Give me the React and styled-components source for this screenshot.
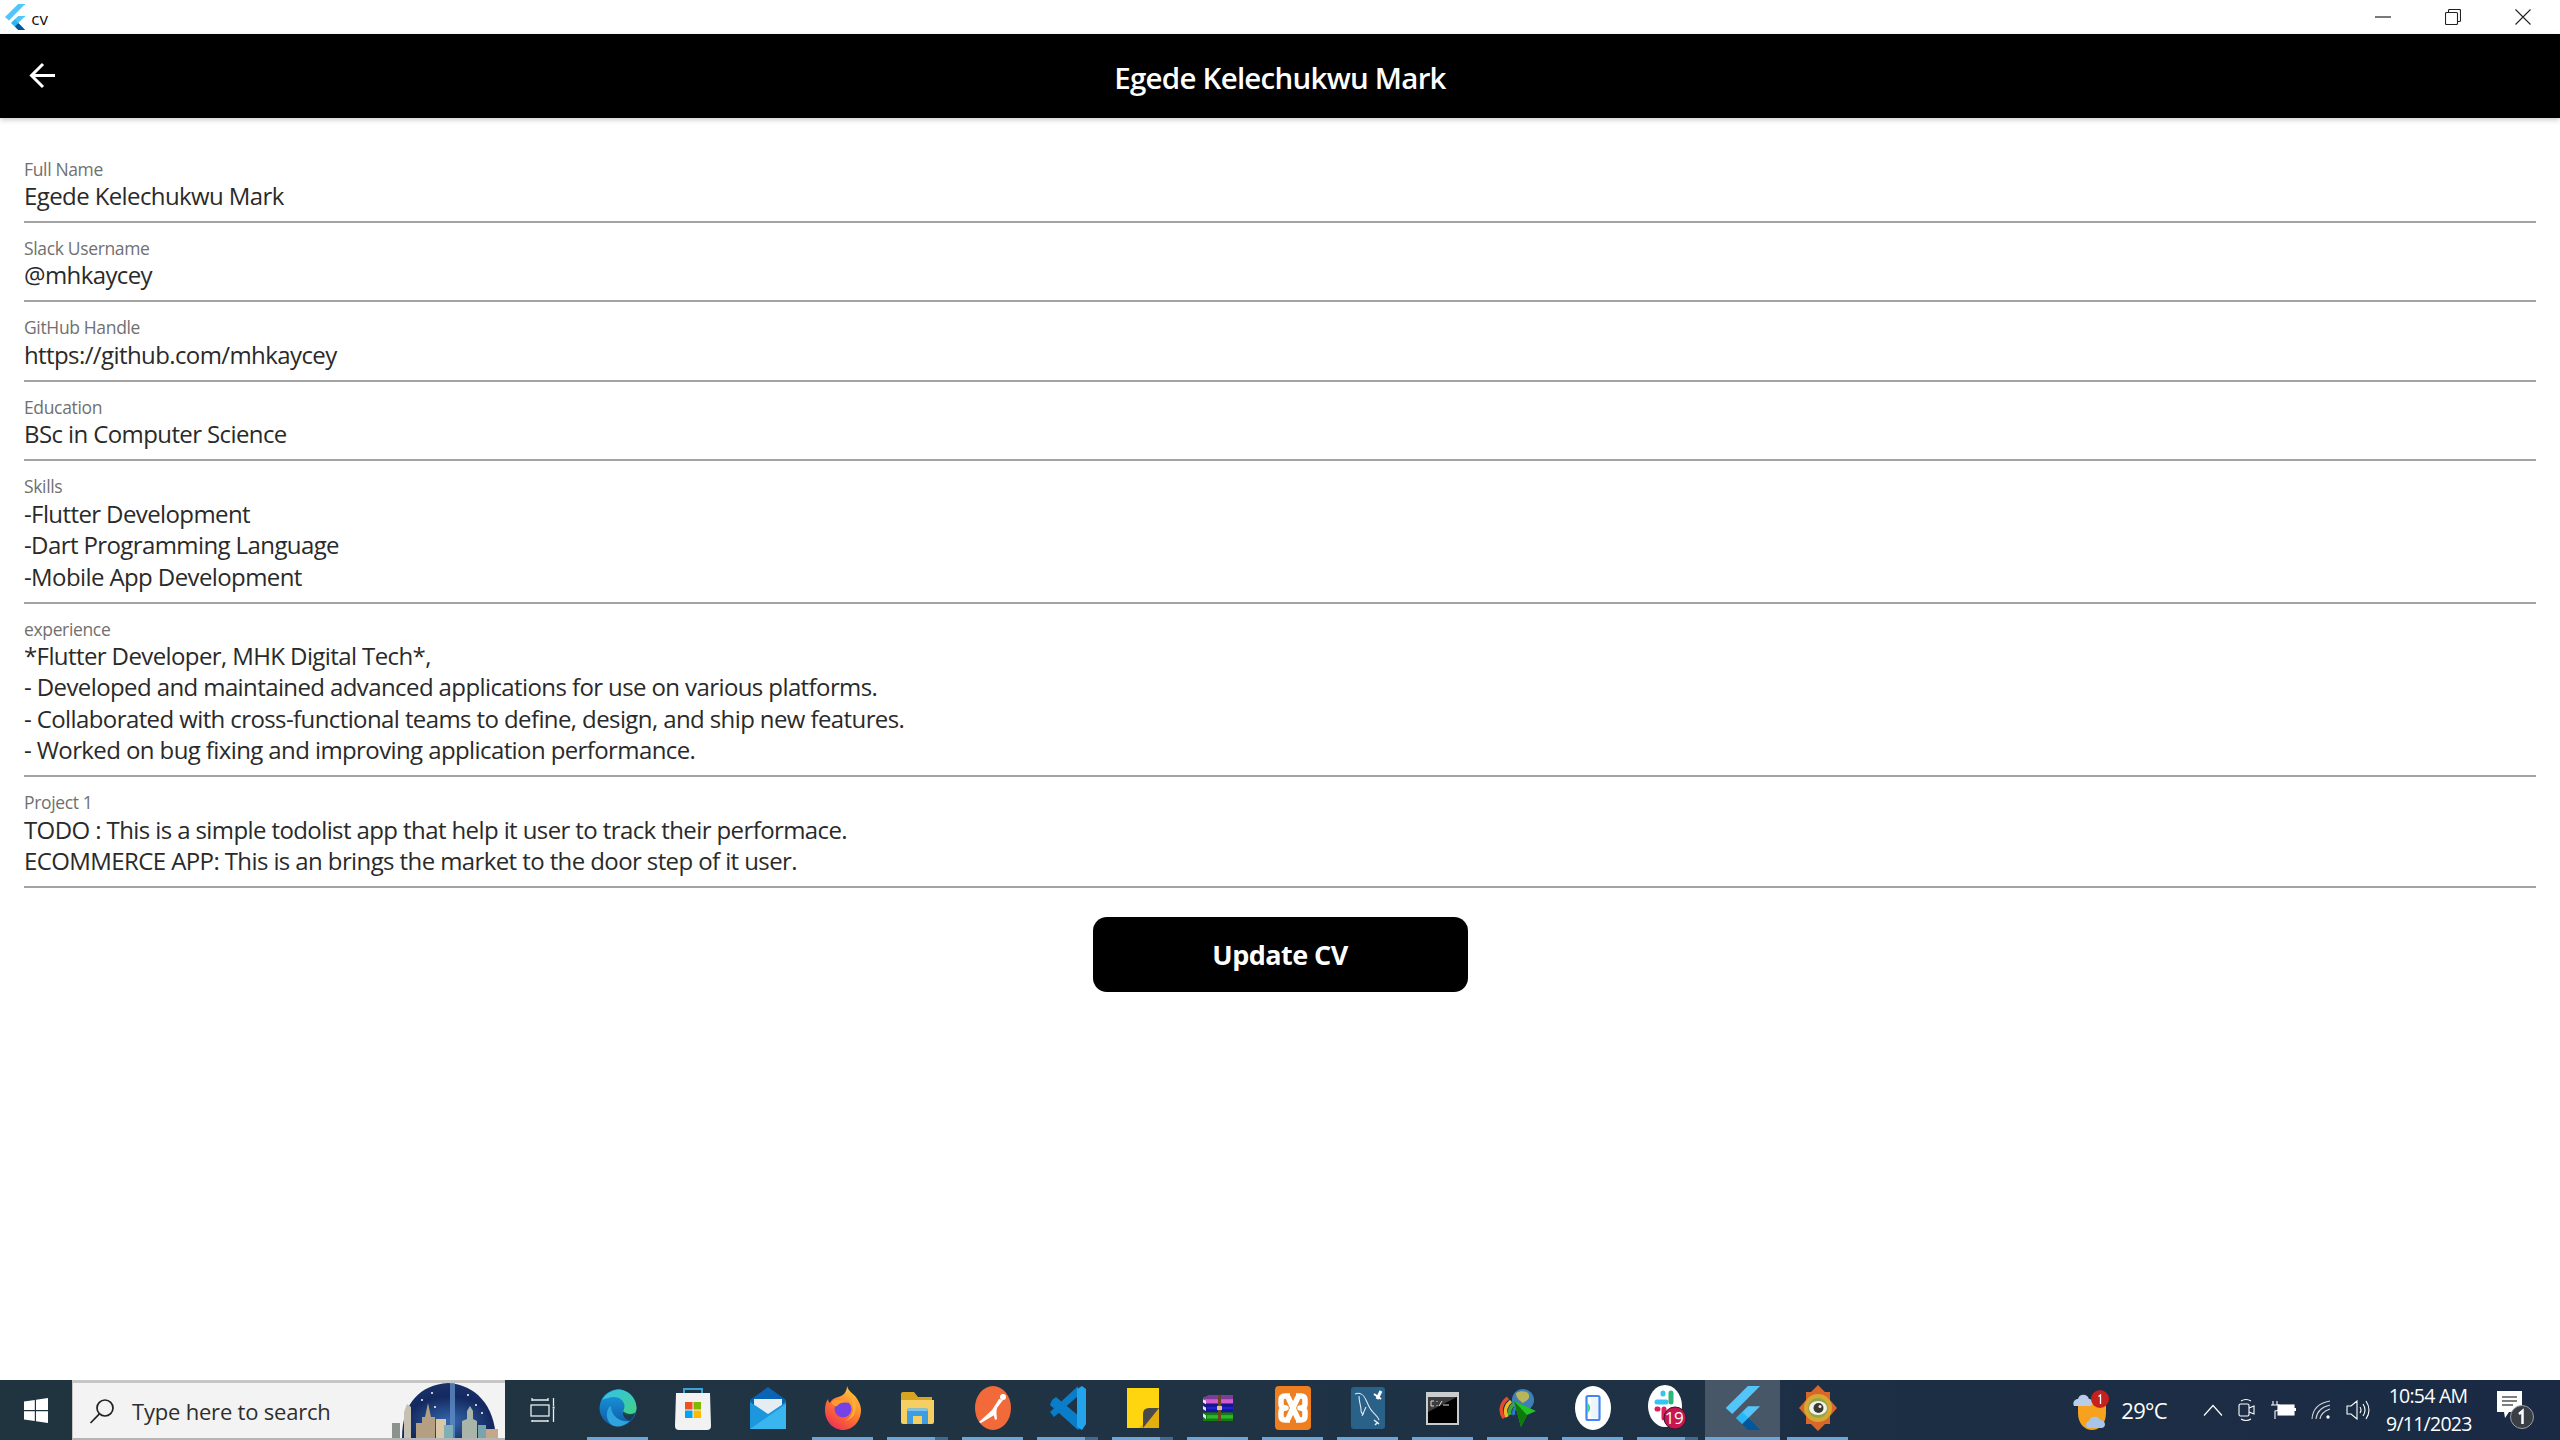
import React from "react";
import styled, { createGlobalStyle } from "styled-components";

const Global = createGlobalStyle`
  html, body { margin: 0; padding: 0; background: #fff; }
  body { font-family: "Open Sans", "Noto Sans", sans-serif; }
  #root { width: 2560px; height: 1440px; }
`;

const Page = styled.div`
  width: 2560px;
  height: 1440px;
  display: flex;
  flex-direction: column;
  overflow: hidden;
`;

const TitleBar = styled.div`
  height: 34px;
  display: flex;
  align-items: center;
  padding: 0 2px 0 4px;
  background: #fff;
`;
const AppName = styled.span`
  margin-left: 6px;
  font-size: 17px;
  color: #111;
  margin-top: 2px;
`;
const Caption = styled.div`
  margin-left: auto;
  display: flex;
`;
const CaptionButton = styled.div`
  width: 70px;
  height: 34px;
  display: flex;
  align-items: center;
  justify-content: center;
`;

const AppBar = styled.header`
  position: relative;
  height: 84px;
  background: #000;
  display: flex;
  align-items: center;
  justify-content: center;
  box-shadow: 0 2px 5px rgba(0, 0, 0, 0.2);
`;
const BackButton = styled.div`
  position: absolute;
  left: 29px;
  top: 28px;
  width: 27px;
  height: 27px;
  display: flex;
`;
const AppTitle = styled.h1`
  margin: 2px 0 0;
  font-size: 29.5px;
  font-weight: 600;
  letter-spacing: -0.75px;
  color: #fff;
`;

const Form = styled.main`
  flex: 1;
  padding: 25.5px 24px 0;
  display: flex;
  flex-direction: column;
`;
const Field = styled.div`
  padding: 14px 0 9.5px;
  border-bottom: 2px solid #a3a3a3;
`;
const Label = styled.div`
  font-size: 17.5px;
  line-height: 22.4px;
  letter-spacing: -0.35px;
  color: #707070;
`;
const Value = styled.div`
  font-size: 24px;
  line-height: 31.5px;
  letter-spacing: -0.6px;
  color: #2a2a2a;
  white-space: pre-line;
`;
const UpdateButton = styled.button`
  align-self: center;
  margin-top: 28.5px;
  width: 375px;
  height: 75px;
  border: 0;
  border-radius: 14px;
  background: #000;
  color: #fff;
  font-family: inherit;
  font-size: 27px;
  font-weight: 700;
  letter-spacing: -0.55px;
`;

const Taskbar = styled.footer`
  height: 60px;
  display: flex;
  align-items: stretch;
  background: linear-gradient(90deg, #20343f 0%, #1f3345 50%, #1a2a44 100%);
`;
const StartCell = styled.div`
  width: 72px;
  display: flex;
  align-items: center;
  justify-content: center;
`;
const SearchBox = styled.div`
  position: relative;
  width: 433px;
  box-sizing: border-box;
  display: flex;
  align-items: center;
  padding-left: 16px;
  background: #f3f3f3;
  border-top: 3px solid #c6c6c6;
  border-left: 1px solid #c6c6c6;
  border-bottom: 2px solid #b5b5b5;
  overflow: hidden;
`;
const SearchText = styled.span`
  margin-left: 17px;
  font-size: 22px;
  letter-spacing: -0.2px;
  color: #2e2e2e;
`;
const SearchArt = styled.div`
  position: absolute;
  right: 5px;
  top: 0;
  bottom: 0;
  width: 110px;
  display: flex;
`;
const TaskCell = styled.div`
  position: relative;
  width: 75px;
  display: flex;
  align-items: center;
  justify-content: center;
  background: ${(p) => (p.$active ? "#475767" : "transparent")};
  padding-bottom: ${(p) => (p.$plain ? "0" : "4px")};
  box-sizing: border-box;
`;
const Running = styled.div`
  position: absolute;
  bottom: 0;
  left: ${(p) => (p.$active ? "0" : "7px")};
  right: ${(p) => (p.$active ? "0" : "7px")};
  height: 3px;
  background: ${(p) =>
    p.$multi
      ? "linear-gradient(90deg, #6ba6d8 0 78%, #3d6c92 78% 100%)"
      : "#6ba6d8"};
`;
const Tray = styled.div`
  margin-left: auto;
  display: flex;
  align-items: center;
  color: #fff;
`;
const Weather = styled.div`
  display: flex;
  align-items: center;
  gap: 10px;
  font-size: 22px;
  letter-spacing: -0.7px;
  margin-right: 36px;
`;
const TrayIcons = styled.div`
  display: flex;
  align-items: center;
  gap: 15px;
  margin-right: 16px;
`;
const Clock = styled.div`
  width: 84px;
  text-align: center;
  font-size: 19.5px;
  line-height: 28px;
  letter-spacing: -0.75px;
`;
const Notify = styled.div`
  margin-left: 27px;
  margin-right: 26px;
  display: flex;
`;

const FlutterLogo = ({ size = 24 }) => (
  <svg width={size * 0.82} height={size} viewBox="0 0 166 202">
    <path fill="#54C5F8" d="M8 101 110 0h56L38 129z" />
    <path fill="#54C5F8" d="M166 93h-56l-54 54 28 28z" />
    <path fill="#29B6F6" d="M56 147l28-28 28 28-28 28z" />
    <path fill="#01579B" d="M84 175l28-28 54 55h-56z" />
  </svg>
);

const WinLogo = () => (
  <svg width="24" height="25" viewBox="0 0 24 25">
    <path fill="#fff" d="M0 3.6 10.8 2v10H0zM12 1.8 24 0v12H12zM0 13.2h10.8V23L0 21.4zM12 13.2h12V25l-12-1.8z" />
  </svg>
);

const SearchGlass = () => (
  <svg width="26" height="26" viewBox="0 0 26 26" fill="none" stroke="#222" strokeWidth="1.7">
    <circle cx="16" cy="10" r="8" />
    <path d="M10.4 15.8 1.5 25" />
  </svg>
);

const CityArt = () => (
  <svg width="110" height="55" viewBox="0 0 110 55">
    <defs>
      <radialGradient id="sky" cx="50%" cy="70%" r="70%">
        <stop offset="0%" stopColor="#3567ad" />
        <stop offset="65%" stopColor="#14295f" />
        <stop offset="100%" stopColor="#1a3268" />
      </radialGradient>
    </defs>
    <path fill="url(#sky)" d="M12 55C12 20 30 2 58 0c28 2 46 22 48 55z" />
    <rect x="60" y="0" width="5" height="55" fill="#5f8cc6" opacity=".8" />
    <g fill="#fff">
      <circle cx="32" cy="17" r="1" /><circle cx="42" cy="10" r="1" /><circle cx="45" cy="24" r="1" />
      <circle cx="78" cy="12" r="1" /><circle cx="86" cy="22" r="1" /><circle cx="92" cy="30" r="1" />
    </g>
    <path fill="#8b938e" d="M2 55V40h8v15z" />
    <path fill="#c5c0b0" d="M14 55V29l3-8 4 3v31z" />
    <path fill="#b49f82" d="M26 55V40h6v-6h3l3-14 3 14h4v21z" />
    <path fill="#d8c8a8" d="M46 55V36h10v19z" />
    <path fill="#7fb0b8" d="M54 55V42h9v13z" />
    <path fill="#a9b5a8" d="M72 55V38l5-2v-8l3-5 3 5v8l4 2v17z" />
    <path fill="#77a4ad" d="M88 55V42h8v13z" />
    <path fill="#c3a88a" d="M96 55V46h12v9z" />
  </svg>
);

const TaskView = () => (
  <svg width="26" height="26" viewBox="0 0 26 26" fill="none" stroke="#e8edf0" strokeWidth="1.3">
    <path d="M2 3h16M2 24h16M2 1v3M18 1v3M2 23v2M18 23v2" />
    <rect x="1" y="8" width="18" height="11" />
    <path d="M23.5 1v8M23.5 12v13" />
    <rect x="22.6" y="9.5" width="2" height="2.2" fill="#e8edf0" stroke="none" />
  </svg>
);

const Edge = () => (
  <svg width="38" height="38" viewBox="0 0 38 38">
    <defs>
      <linearGradient id="edgeA" x1="0" y1="0" x2="0" y2="1">
        <stop offset="0" stopColor="#1b9de2" />
        <stop offset="1" stopColor="#0c59a4" />
      </linearGradient>
      <linearGradient id="edgeB" x1="0" y1="0" x2="1" y2="1">
        <stop offset="0" stopColor="#35c1f1" />
        <stop offset="1" stopColor="#41d27f" />
      </linearGradient>
    </defs>
    <circle cx="19" cy="19" r="18.5" fill="url(#edgeA)" />
    <path fill="url(#edgeB)" d="M3 11C8 2 18 .5 19 .5 30 .5 37.5 10 37.5 19c0 5-4 7-8 7-3 0-6-1-6-3 0-1 2-2 2-6 0-5-5-9-10-9-5 0-10 2-12.500 3z" />
    <path fill="#1c3545" opacity=".85" d="M24 22c3 3 8 4 12 2-1 3-3 6-5 8-5-1-8-6-7-10z" />
    <path fill="#2fa3dc" d="M12 17c0 9 7 14 13 15 3 .5 5 0 6-.5-4 4-8 6-12 6-9 0-12-8-11-14 .5-3 2-6 4-6.500z" />
  </svg>
);

const Store = () => (
  <svg width="36" height="44" viewBox="0 0 36 44">
    <path fill="none" stroke="#3aa5d8" strokeWidth="2" d="M9 9V3h18v6" />
    <path fill="#f2f2f2" d="M1 7h34l1 33q0 4-4 4H4q-4 0-4-4z" />
    <rect x="10" y="16" width="7.500" height="7.500" fill="#f05022" />
    <rect x="18.500" y="16" width="7.500" height="7.500" fill="#7fba00" />
    <rect x="10" y="24.500" width="7.500" height="7.500" fill="#00a4ef" />
    <rect x="18.500" y="24.500" width="7.500" height="7.500" fill="#ffb900" />
  </svg>
);

const Mail = () => (
  <svg width="36" height="42" viewBox="0 0 36 42">
    <path fill="#0b63b5" d="M18 0 36 13v6H0v-6z" />
    <path fill="#e6edf2" d="M4 12h28v12L18 31 4 24z" />
    <path fill="#1c96dd" d="M0 15 18 27 36 15v27H0z" />
    <path fill="#39b5f0" d="M0 42 36 17v25z" />
  </svg>
);

const Firefox = () => (
  <svg width="36" height="44" viewBox="0 0 36 44">
    <defs>
      <linearGradient id="ffA" x1="0.8" y1="0" x2="0.2" y2="1">
        <stop offset="0" stopColor="#ffd23a" />
        <stop offset="0.5" stopColor="#ff7b2d" />
        <stop offset="1" stopColor="#ef2b55" />
      </linearGradient>
    </defs>
    <path fill="url(#ffA)" d="M22 0c1 4 4 6 7 9 4 4 7 10 7 15 0 11-8 20-18 20S0 35 0 24c0-5 1-8 3-11 0 2 1 3 2 4 1-3 4-5 8-6 5-1 9-5 9-11z" />
    <circle cx="18" cy="23" r="8.500" fill="#7542e5" />
    <path fill="#ff9a2e" d="M6 16c4-3 9-3 14-2 2 .5 3 2 3 3-5-1-8 0-10 2-2 3-4 1-7-3z" />
    <path fill="#ffb03a" d="M26 11c4 4 6 9 4 15-1 5-6 8-10 9 6-3 9-9 8-14 0-3-1-7-2-10z" />
  </svg>
);

const Folder = () => (
  <svg width="33" height="32" viewBox="0 0 33 32">
    <path fill="#d9a520" d="M0 2q0-2 2-2h11l4 5h14v6H0z" />
    <path fill="#f6cf63" d="M0 8h33v22q0 2-2 2H2q-2 0-2-2z" />
    <path fill="#3e9de0" d="M6 32V18q0-1.500 1.500-1.500h18Q27 16.500 27 18v14h-6v-8H12v8z" />
    <path fill="#7cc3ee" d="M6 19q0-2.500 2-2.500h17q2 0 2 2.500z" />
  </svg>
);

const Postman = () => (
  <svg width="36" height="44" viewBox="0 0 36 44">
    <ellipse cx="18" cy="22" rx="18" ry="22" fill="#f2693a" />
    <g fill="#fff">
      <circle cx="28" cy="11" r="3" />
      <path d="M24 13 17 24 4 36l2 1 15-9 1-6 6-8z" />
      <path d="M18 26l2 8 2-1-1-9z" />
    </g>
  </svg>
);

const VSCode = () => (
  <svg width="36" height="44" viewBox="0 0 36 44">
    <path fill="#0a7dc8" d="M2 14 6 11 36 36l-8 8L0 19z" />
    <path fill="#0a7dc8" d="M0 26 28 0v10L4 31z" />
    <path fill="#22a3ec" d="M27 3l5-3 4 3v35l-4 6-5-3z" />
  </svg>
);

const Sticky = () => (
  <svg width="32" height="40" viewBox="0 0 32 40">
    <rect width="32" height="40" fill="#ffd50f" />
    <path fill="#e4ae0c" d="M32 20v20H12z" />
    <path fill="#4a4a4a" d="M16 40 32 20H22q-6 0-6 6z" />
  </svg>
);

const WinRar = () => (
  <svg width="30" height="26" viewBox="0 0 30 31" preserveAspectRatio="none">
    <path fill="#7d3c98" d="M0 3 6 0h24v9H0z" />
    <path fill="#d15bd0" d="M2 5h28v5H2z" />
    <path fill="#14149a" d="M1 11h29v9H1z" />
    <path fill="#2222d0" d="M4 14h26v3H4z" />
    <path fill="#127e12" d="M0 21h30v10H0z" />
    <path fill="#2cb82c" d="M4 24h26v4H4z" />
    <path fill="#e8e8e8" d="M0 5l3 2v4L0 9zM0 13l3 2v4l-3-2zM0 22l3 2v5l-3-3z" />
    <rect x="15" y="0" width="3" height="31" fill="#6b4423" />
    <rect x="14" y="13" width="5" height="5" fill="#cfc0a0" />
  </svg>
);

const Xampp = () => (
  <svg width="36" height="44" viewBox="0 0 36 44">
    <rect width="36" height="44" rx="4" fill="#ee7f20" />
    <g fill="none" stroke="#fff" strokeWidth="5.500" strokeLinejoin="round">
      <path d="M15 10H10Q6 10 6 14v4q0 4 5 4-5 0-5 4v4q0 4 4 4h5" />
      <path d="M21 10h5q4 0 4 4v4q0 4-5 4 5 0 5 4v4q0 4-4 4h-5" />
      <path d="M13 11l10 22M23 11 13 33" />
    </g>
  </svg>
);

const MySql = () => (
  <svg width="34" height="42" viewBox="0 0 34 42">
    <rect width="34" height="42" rx="3" fill="#2a6188" />
    <path fill="none" stroke="#dfe9f0" strokeWidth="1.100" d="M4 7c5-2 9 1 11 6 2 4 3 8 6 11 3 4 6 5 7 9M8 9c0 6 2 10 2 14 0 3 1 4 3 4M15 20l-4 9" />
    <path fill="none" stroke="#dfe9f0" strokeWidth="1.600" d="M23 33l5 4M24 38l3-3" />
    <path stroke="#fff" strokeWidth="3" d="M26 12l4-8" />
    <path stroke="#fff" strokeWidth="2" d="M23 7l7 5" />
  </svg>
);

const Cmd = () => (
  <svg width="33" height="33" viewBox="0 0 33 33">
    <rect width="33" height="33" fill="#c9cdd0" />
    <rect x="2" y="5" width="29" height="26" fill="#000" />
    <path fill="#555" d="M2 5h29L2 20z" opacity=".7" />
    <path stroke="#ddd" strokeWidth="1" fill="none" d="M8 9H5v5h3M11 9v1M11 13v1M13 14l3-5M17 13h6" />
  </svg>
);

const Idm = () => (
  <svg width="38" height="38" viewBox="0 0 38 38">
    <circle cx="24" cy="11" r="11" fill="#3f7fb8" />
    <path fill="#b9b65a" d="M17 4c5-3 12-2 13 2 1 5-4 6-6 8-3-2-7-5-7-10z" />
    <path fill="none" stroke="#e74c2a" strokeWidth="3.500" d="M9 9C2 14 0 22 5 29" />
    <path fill="none" stroke="#f4b52a" strokeWidth="3.500" d="M12 12C7 16 5 22 8 28" />
    <path fill="none" stroke="#3ea63e" strokeWidth="3.500" d="M15 15c-4 3-5 7-4 11" />
    <path fill="none" stroke="#2f79c7" strokeWidth="3" d="M17 18c-2 2-3 5-2 8" />
    <path fill="#22c322" d="M15 12 37 22l-9 4-6 12z" />
    <path fill="#0b7a0b" d="M15 12 28 26l-6 12z" />
  </svg>
);

const AndroidPhone = () => (
  <svg width="36" height="44" viewBox="0 0 36 44">
    <ellipse cx="18" cy="22" rx="18" ry="22" fill="#fff" />
    <rect x="11.500" y="10" width="13" height="24" rx="1.500" fill="none" stroke="#4285f4" strokeWidth="2.200" />
    <path fill="#3ddc84" d="M12 17a5.500 5.500 0 0 1 0 10z" />
    <path fill="#9fc7fa" d="M16 12h7v20h-7z" opacity=".2" />
  </svg>
);

const Slack = () => (
  <svg width="40" height="46" viewBox="0 0 40 46">
    <ellipse cx="17" cy="21" rx="17" ry="21" fill="#fff" />
    <g strokeLinecap="round" strokeWidth="5" fill="none">
      <path stroke="#36c5f0" d="M9 17h9M15 8v1" />
      <path stroke="#2eb67d" d="M23 8v9" />
      <path stroke="#e01e5a" d="M9 24h1M16 24v9" />
    </g>
    <circle cx="27" cy="33" r="11" fill="#c8174e" stroke="#3d1530" strokeWidth="1" />
  </svg>
);

const SlackCount = styled.span`
  position: absolute;
  left: 33px;
  top: 27px;
  width: 22px;
  text-align: center;
  font-size: 17px;
  line-height: 22px;
  letter-spacing: -0.5px;
  color: #fff;
`;

const Eye = () => (
  <svg width="38" height="46" viewBox="0 0 38 46">
    <path fill="#d9662a" d="M19 0l7 7h5v8l7 8-7 8v8h-5l-7 7-7-7H7v-8l-7-8 7-8V7h5z" />
    <circle cx="19" cy="23" r="14" fill="#d8a72f" />
    <circle cx="19" cy="23" r="10" fill="#8fa64a" />
    <ellipse cx="19" cy="23" rx="9" ry="7" fill="#f2f2ee" />
    <circle cx="19.500" cy="23" r="5" fill="#3a3a32" />
    <circle cx="21" cy="21.500" r="1.500" fill="#eee" />
  </svg>
);

const WeatherIcon = () => (
  <svg width="38" height="42" viewBox="0 0 38 42">
    <path fill="#f6a21f" d="M5 12h28v12c0 11-7 17-14 17S5 35 5 24z" />
    <path fill="#b9cdea" d="M1 17c-2-4 1-7 4-7 1-5 9-6 11 0 4 0 5 6 1 7z" />
    <path fill="#a8c4ea" d="M16 39c-4 0-4-6 0-7 1-5 9-6 11-1 6 0 7 8 1 8z" />
    <circle cx="27" cy="10" r="9" fill="#c5211f" />
    <path stroke="#fff" strokeWidth="1.300" fill="none" d="M25.500 7.500l2-1.500v9" />
  </svg>
);

const Chevron = () => (
  <svg width="20" height="12" viewBox="0 0 20 12" fill="none" stroke="#fff" strokeWidth="1.200"><path d="M1 11.500 10 1.500l9 10" /></svg>
);
const MeetNow = () => (
  <svg width="18" height="24" viewBox="0 0 18 24" fill="none" stroke="#fff" strokeWidth="1.100">
    <rect x="1" y="6" width="10" height="12" rx="1.500" /><path d="M11 10l5-2v8l-5-2" /><path d="M3 3q5-3 10 0M3 21q5 3 10 0" />
  </svg>
);
const Battery = () => (
  <svg width="25" height="18" viewBox="0 0 25 18" fill="none" stroke="#fff" strokeWidth="1.100">
    <path d="M2 0v4M6 0v4M0 4h8v3q0 3-4 3v8" /><rect x="7" y="4" width="16" height="10" fill="#fff" /><path d="M24 7v3" strokeWidth="2" />
  </svg>
);
const Wifi = () => (
  <svg width="20" height="20" viewBox="0 0 20 20" fill="none" stroke="#fff" strokeWidth="1.100">
    <path d="M1 19Q2 4 19 1M5 19Q6 8 19 5M9 19q1-7 10-10" opacity=".8" /><circle cx="17" cy="17" r="1.700" fill="#fff" stroke="none" />
  </svg>
);
const Volume = () => (
  <svg width="24" height="20" viewBox="0 0 24 20" fill="none" stroke="#fff" strokeWidth="1.100">
    <path d="M1 6h4l6-5v18l-6-5H1zM14 7q2 3 0 6M17 4q4 6 0 12M20 1q6 9 0 18" />
  </svg>
);
const NotifyIcon = () => (
  <svg width="37" height="38" viewBox="0 0 37 38">
    <path fill="#fff" d="M0 0h25v21H12l-4 6-1-6H0z" />
    <path stroke="#555" strokeWidth="1.300" d="M5 6h15M5 10h15M5 14h11" />
    <circle cx="25" cy="26" r="11.500" fill="#3a3f46" stroke="#9aa0a6" strokeWidth="1" />
    <path stroke="#fff" strokeWidth="2.500" fill="none" d="M22 23l3.500-3v13" />
  </svg>
);

const fields = [
  ["Full Name", "Egede Kelechukwu Mark"],
  ["Slack Username", "@mhkaycey"],
  ["GitHub Handle", "https://github.com/mhkaycey"],
  ["Education", "BSc in Computer Science"],
  ["Skills", "-Flutter Development\n-Dart Programming Language\n-Mobile App Development"],
  [
    "experience",
    "*Flutter Developer, MHK Digital Tech*,\n- Developed and maintained advanced applications for use on various platforms.\n- Collaborated with cross-functional teams to define, design, and ship new features.\n- Worked on bug fixing and improving application performance.",
  ],
  [
    "Project 1",
    "TODO : This is a simple todolist app that help it user to track their performace.\nECOMMERCE APP: This is an brings the market to the door step of it user.",
  ],
];

const apps = [
  { icon: <Edge />, run: true },
  { icon: <Store /> },
  { icon: <Mail /> },
  { icon: <Firefox />, run: true },
  { icon: <Folder />, run: true, multi: true },
  { icon: <Postman />, run: true },
  { icon: <VSCode />, run: true, multi: true },
  { icon: <Sticky />, run: true, multi: true },
  { icon: <WinRar />, run: true },
  { icon: <Xampp />, run: true },
  { icon: <MySql />, run: true },
  { icon: <Cmd />, run: true },
  { icon: <Idm />, run: true },
  { icon: <AndroidPhone />, run: true },
  { icon: <Slack />, run: true, multi: true, badge: "19" },
  { icon: <FlutterLogo size={44} />, run: true, active: true },
  { icon: <Eye />, run: true },
];

export default function App() {
  return (
    <Page>
      <Global />
      <TitleBar>
        <FlutterLogo size={26} />
        <AppName>cv</AppName>
        <Caption>
          <CaptionButton>
            <svg width="16" height="2" viewBox="0 0 16 2"><path d="M0 1h16" stroke="#222" strokeWidth="1.200" /></svg>
          </CaptionButton>
          <CaptionButton>
            <svg width="16" height="16" viewBox="0 0 16 16" fill="none" stroke="#222" strokeWidth="1.100">
              <rect x="0.500" y="3.500" width="12" height="12" rx="1" />
              <path d="M3.500 3.500V1.500q0-1 1-1h10q1 0 1 1v10q0 1-1 1h-2" />
            </svg>
          </CaptionButton>
          <CaptionButton>
            <svg width="16" height="16" viewBox="0 0 16 16" fill="none" stroke="#222" strokeWidth="1.100"><path d="M.5.500l15 15M15.500.500l-15 15" /></svg>
          </CaptionButton>
        </Caption>
      </TitleBar>
      <AppBar>
        <BackButton>
          <svg width="27" height="27" viewBox="0 0 27 27" fill="none" stroke="#fff" strokeWidth="3">
            <path d="M26 13.500H3M14 2 2.500 13.500 14 25" />
          </svg>
        </BackButton>
        <AppTitle>Egede Kelechukwu Mark</AppTitle>
      </AppBar>
      <Form>
        {fields.map(([label, value]) => (
          <Field key={label}>
            <Label>{label}</Label>
            <Value>{value}</Value>
          </Field>
        ))}
        <UpdateButton>Update CV</UpdateButton>
      </Form>
      <Taskbar>
        <StartCell><WinLogo /></StartCell>
        <SearchBox>
          <SearchGlass />
          <SearchText>Type here to search</SearchText>
          <SearchArt><CityArt /></SearchArt>
        </SearchBox>
        <TaskCell $plain><TaskView /></TaskCell>
        {apps.map((a, i) => (
          <TaskCell key={i} $active={a.active}>
            {a.icon}
            {a.badge && <SlackCount>{a.badge}</SlackCount>}
            {a.run && <Running $multi={a.multi} $active={a.active} />}
          </TaskCell>
        ))}
        <Tray>
          <Weather><WeatherIcon />29°C</Weather>
          <TrayIcons>
            <Chevron /><MeetNow /><Battery /><Wifi /><Volume />
          </TrayIcons>
          <Clock>10:54 AM<br />9/11/2023</Clock>
          <Notify><NotifyIcon /></Notify>
        </Tray>
      </Taskbar>
    </Page>
  );
}
